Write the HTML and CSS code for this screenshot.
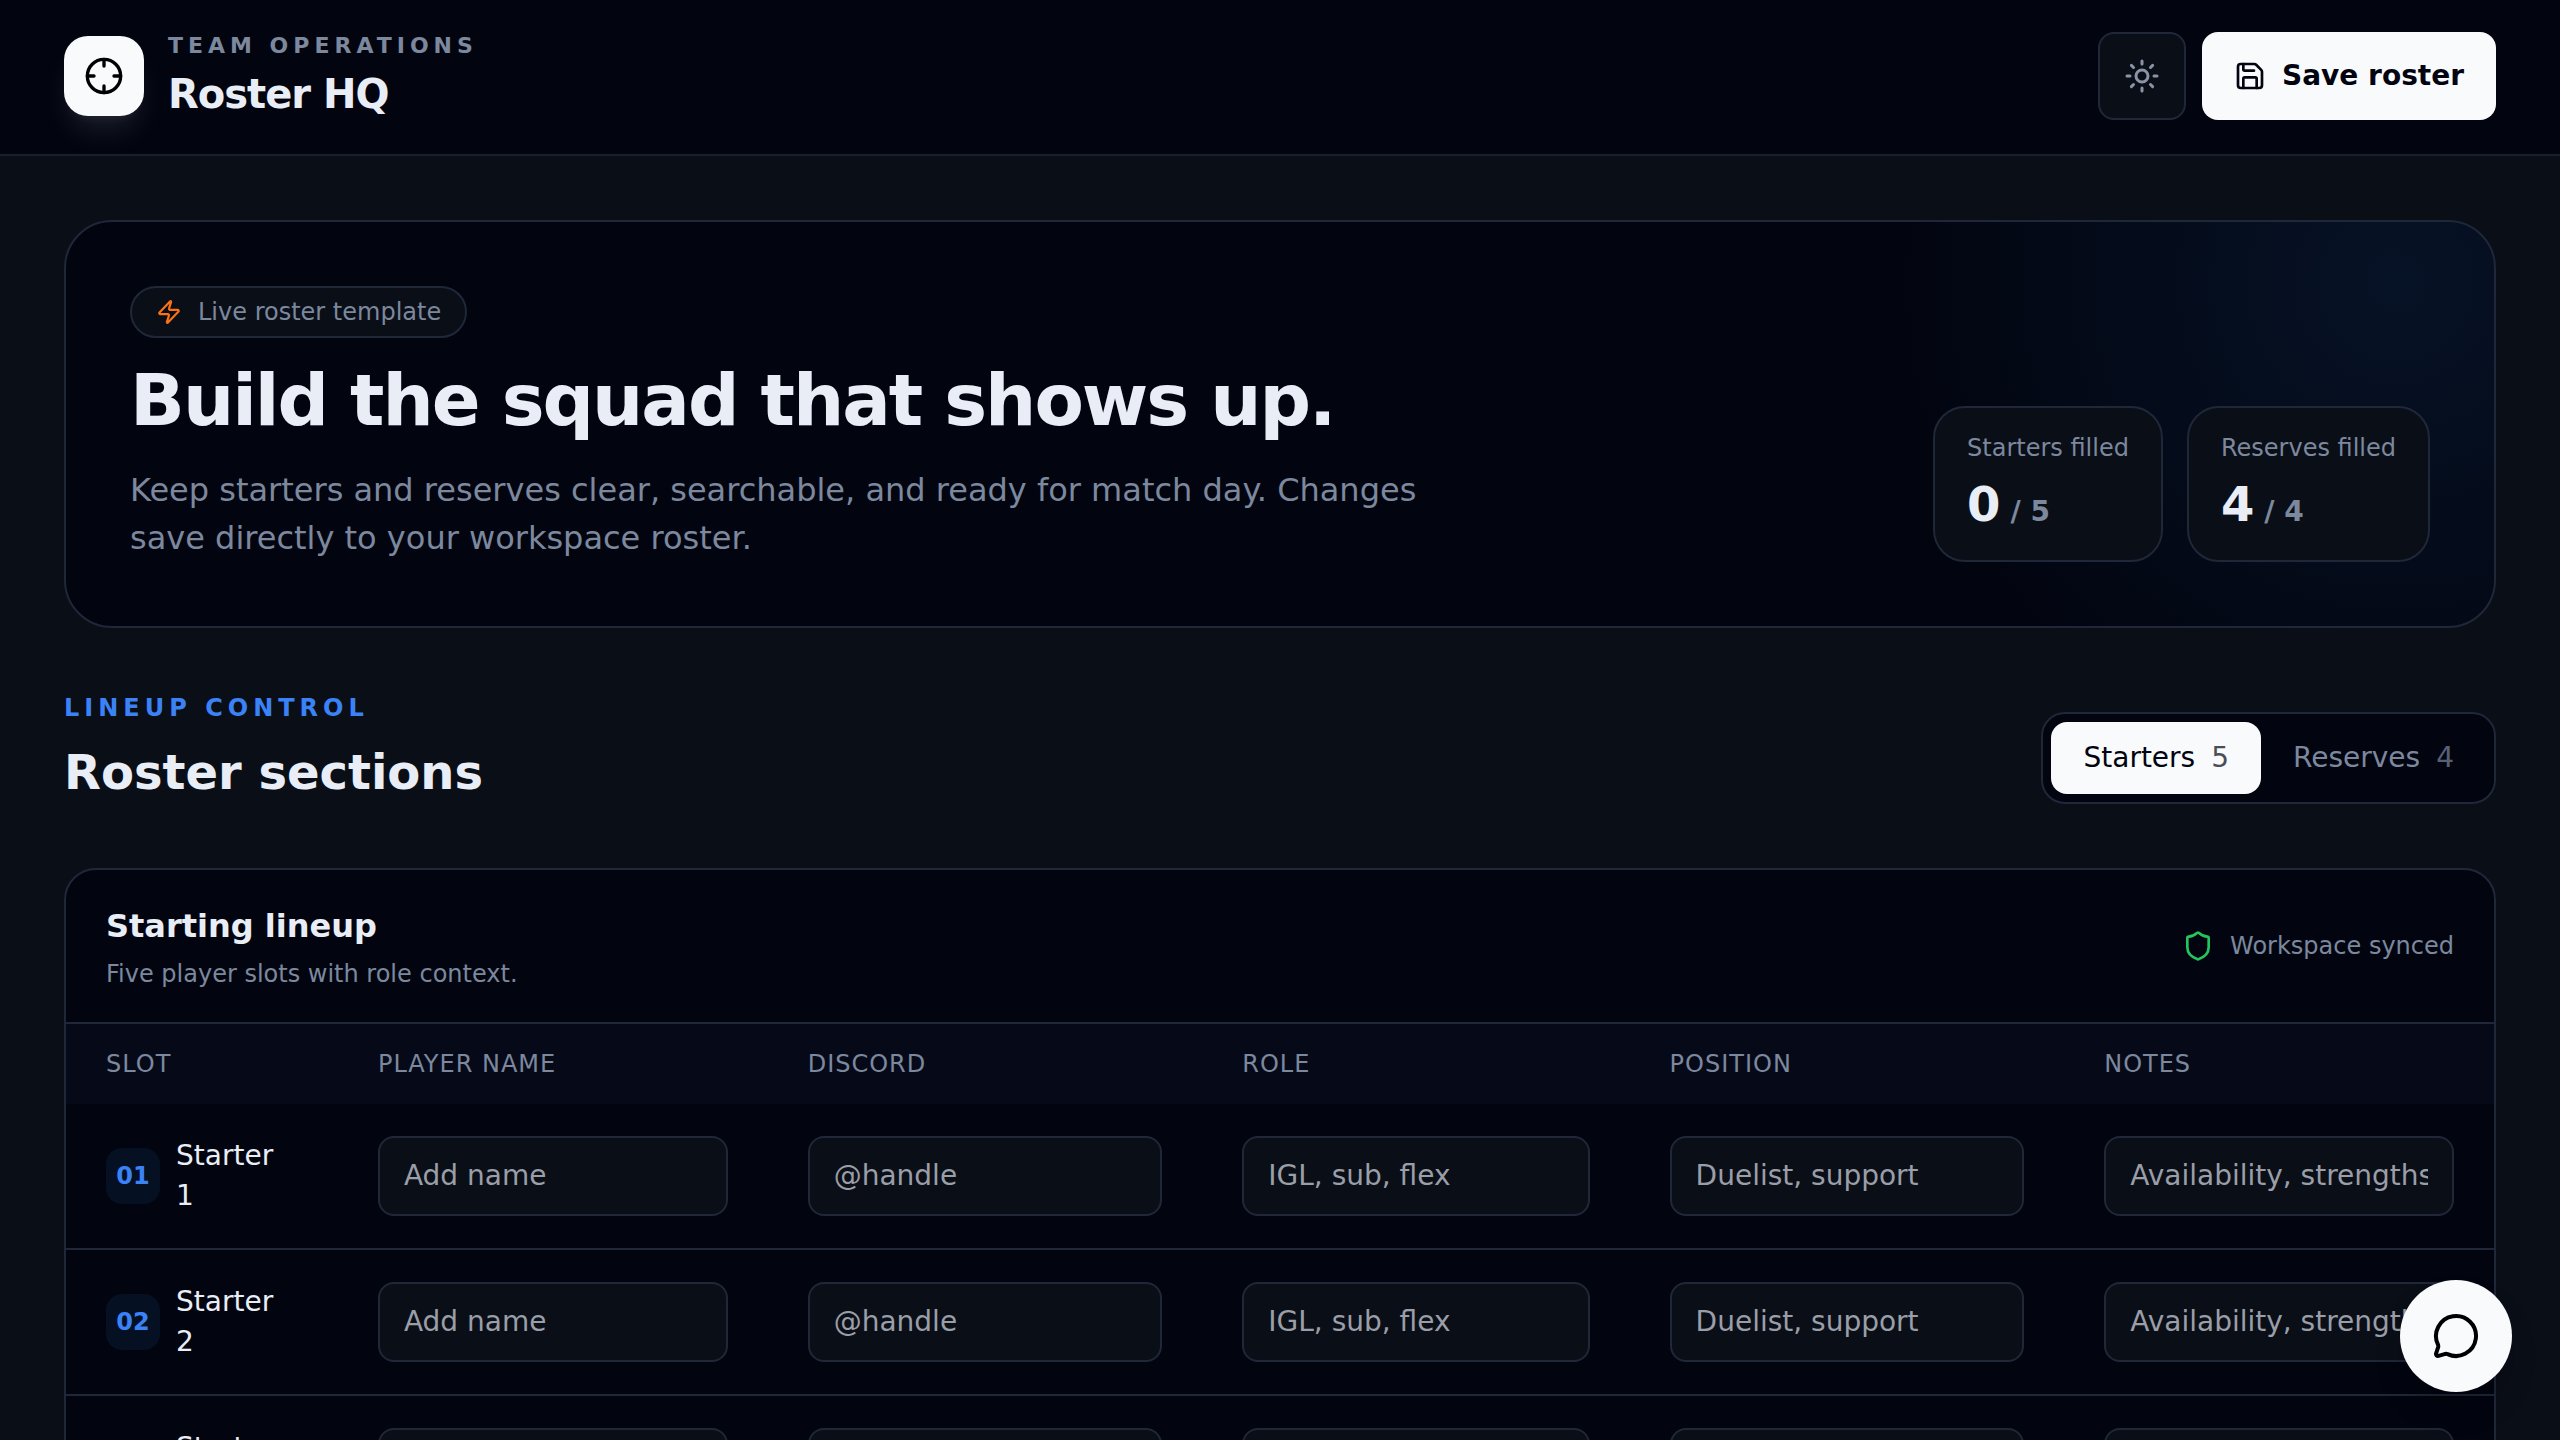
FILE: index.html
```html
<!DOCTYPE html>
<html lang="en">
<head>
  <meta charset="UTF-8">
  <meta name="viewport" content="width=device-width, initial-scale=1.0">
  <title>Roster HQ</title>
  <link rel="stylesheet" href="styles.css">
</head>
<body>

<header class="topbar">
  <div class="brand">
    <div class="brand-logo">
      <svg class="icon icon-xl" viewBox="0 0 24 24"><circle cx="12" cy="12" r="10"/><path d="M22 12h-4M6 12H2M12 6V2M12 22v-4"/></svg>
    </div>
    <div>
      <p class="brand-label">TEAM OPERATIONS</p>
      <h1 class="brand-name">Roster HQ</h1>
    </div>
  </div>
  <div class="topbar-actions">
    <button class="icon-btn" type="button" aria-label="Toggle theme">
      <svg class="icon icon-lg" viewBox="0 0 24 24"><circle cx="12" cy="12" r="4"/><path d="M12 2v2M12 20v2M4.93 4.93l1.41 1.41M17.66 17.66l1.41 1.41M2 12h2M20 12h2M6.34 17.66l-1.41 1.41M19.07 4.93l-1.41 1.41"/></svg>
    </button>
    <button class="save-btn" type="button">
      <svg class="icon icon-md" viewBox="0 0 24 24"><path d="M15.2 3a2 2 0 0 1 1.4.6l3.8 3.8a2 2 0 0 1 .6 1.4V19a2 2 0 0 1-2 2H5a2 2 0 0 1-2-2V5a2 2 0 0 1 2-2z"/><path d="M17 21v-7a1 1 0 0 0-1-1H8a1 1 0 0 0-1 1v7"/><path d="M7 3v4a1 1 0 0 0 1 1h7"/></svg>
      Save roster
    </button>
  </div>
</header>

<main class="page">
  <section class="hero">
    <div class="hero-copy">
      <span class="pill">
        <svg class="icon icon-sm" viewBox="0 0 24 24"><path d="M4 14a1 1 0 0 1-.78-1.63l9.9-10.2a.5.5 0 0 1 .86.46l-1.92 6.02A1 1 0 0 0 13 10h7a1 1 0 0 1 .78 1.63l-9.9 10.2a.5.5 0 0 1-.86-.46l1.92-6.02A1 1 0 0 0 11 14z"/></svg>
        Live roster template
      </span>
      <h2 class="hero-title">Build the squad that shows up.</h2>
      <p class="hero-text">Keep starters and reserves clear, searchable, and ready for match day. Changes save directly to your workspace roster.</p>
    </div>
    <div class="stats">
      <div class="stat">
        <p class="stat-label">Starters filled</p>
        <p class="stat-value">0<span class="stat-total">/ 5</span></p>
      </div>
      <div class="stat">
        <p class="stat-label">Reserves filled</p>
        <p class="stat-value">4<span class="stat-total">/ 4</span></p>
      </div>
    </div>
  </section>

  <section class="section-head">
    <div>
      <p class="section-label">LINEUP CONTROL</p>
      <h2 class="section-title">Roster sections</h2>
    </div>
    <div class="tabs" role="tablist">
      <button class="tab active" type="button" role="tab" aria-selected="true">Starters <span class="tab-count">5</span></button>
      <button class="tab" type="button" role="tab" aria-selected="false">Reserves <span class="tab-count">4</span></button>
    </div>
  </section>

  <section class="card">
    <div class="card-head">
      <div>
        <h3 class="card-title">Starting lineup</h3>
        <p class="card-text">Five player slots with role context.</p>
      </div>
      <p class="sync">
        <svg class="icon icon-md" viewBox="0 0 24 24"><path d="M20 13c0 5-3.5 7.5-7.66 8.95a1 1 0 0 1-.67-.01C7.5 20.5 4 18 4 13V6a1 1 0 0 1 1-1c2 0 4.5-1.2 6.24-2.72a1.17 1.17 0 0 1 1.52 0C14.51 3.81 17 5 19 5a1 1 0 0 1 1 1z"/></svg>
        Workspace synced
      </p>
    </div>
    <table class="roster">
      <colgroup>
        <col class="col-slot">
        <col class="col-name">
        <col class="col-discord">
        <col class="col-role">
        <col class="col-position">
        <col class="col-notes">
      </colgroup>
      <thead>
        <tr>
          <th scope="col">SLOT</th>
          <th scope="col">PLAYER NAME</th>
          <th scope="col">DISCORD</th>
          <th scope="col">ROLE</th>
          <th scope="col">POSITION</th>
          <th scope="col">NOTES</th>
        </tr>
      </thead>
      <tbody>
        <tr>
          <td><div class="slot"><span class="slot-no">01</span><span class="slot-name">Starter 1</span></div></td>
          <td><input type="text" placeholder="Add name" aria-label="Starter 1 player name"></td>
          <td><input type="text" placeholder="@handle" aria-label="Starter 1 Discord"></td>
          <td><input type="text" placeholder="IGL, sub, flex" aria-label="Starter 1 role"></td>
          <td><input type="text" placeholder="Duelist, support" aria-label="Starter 1 position"></td>
          <td><input type="text" placeholder="Availability, strengths" aria-label="Starter 1 notes"></td>
        </tr>
        <tr>
          <td><div class="slot"><span class="slot-no">02</span><span class="slot-name">Starter 2</span></div></td>
          <td><input type="text" placeholder="Add name" aria-label="Starter 2 player name"></td>
          <td><input type="text" placeholder="@handle" aria-label="Starter 2 Discord"></td>
          <td><input type="text" placeholder="IGL, sub, flex" aria-label="Starter 2 role"></td>
          <td><input type="text" placeholder="Duelist, support" aria-label="Starter 2 position"></td>
          <td><input type="text" placeholder="Availability, strengths" aria-label="Starter 2 notes"></td>
        </tr>
        <tr>
          <td><div class="slot"><span class="slot-no">03</span><span class="slot-name">Starter 3</span></div></td>
          <td><input type="text" placeholder="Add name" aria-label="Starter 3 player name"></td>
          <td><input type="text" placeholder="@handle" aria-label="Starter 3 Discord"></td>
          <td><input type="text" placeholder="IGL, sub, flex" aria-label="Starter 3 role"></td>
          <td><input type="text" placeholder="Duelist, support" aria-label="Starter 3 position"></td>
          <td><input type="text" placeholder="Availability, strengths" aria-label="Starter 3 notes"></td>
        </tr>
      </tbody>
    </table>
  </section>
</main>

<button class="chat-btn" type="button" aria-label="Open chat">
  <svg class="icon icon-xxl" viewBox="0 0 24 24"><path d="M2.992 16.342a2 2 0 0 1 .094 1.167l-1.065 3.29a1 1 0 0 0 1.236 1.168l3.413-.998a2 2 0 0 1 1.099.092 10 10 0 1 0-4.777-4.719"/></svg>
</button>

</body>
</html>
```

FILE: styles.css
```css
:root {
  --bg: #0a0e17;
  --panel: #020510;
  --head: #060a18;
  --line: #1f2739;
  --text: #e9eef6;
  --muted: #7c889e;
  --light: #f9fafc;
  --blue: #3b82f6;
}
* {
  box-sizing: border-box;
}
body {
  margin: 0;
  background: var(--bg);
  color: var(--text);
  font-family: "DejaVu Sans", sans-serif;
  font-size: 28px;
  line-height: 40px;
}
h1, h2, h3, p {
  margin: 0;
}
button, input {
  font: inherit;
}
button {
  border: 0;
  cursor: pointer;
}

/* Icons */
.icon {
  flex: none;
  fill: none;
  stroke: currentColor;
  stroke-width: 2;
  stroke-linecap: round;
  stroke-linejoin: round;
}
.icon-sm { width: 26px; height: 26px; }
.icon-md { width: 32px; height: 32px; }
.icon-lg { width: 36px; height: 36px; }
.icon-xl { width: 40px; height: 40px; }
.icon-xxl { width: 48px; height: 48px; }

/* Top bar */
.topbar {
  display: flex;
  justify-content: space-between;
  align-items: center;
  padding: 32px 64px 34px;
  background: #020410;
  border-bottom: 2px solid #18202c;
}
.brand {
  display: flex;
  align-items: center;
  gap: 24px;
}
.brand-logo {
  display: flex;
  justify-content: center;
  align-items: center;
  width: 80px;
  height: 80px;
  border-radius: 24px;
  background: var(--light);
  color: #000;
  box-shadow: 0 20px 30px -6px rgba(249, 250, 252, 0.1), 0 8px 12px -8px rgba(249, 250, 252, 0.1);
}
.brand-label {
  margin-bottom: 8px;
  color: var(--muted);
  font-size: 22px;
  font-weight: 700;
  line-height: 28px;
  letter-spacing: 5px;
}
.brand-name {
  font-size: 40px;
  line-height: 52px;
  letter-spacing: -1px;
}
.topbar-actions {
  display: flex;
  gap: 16px;
}
.icon-btn {
  display: flex;
  justify-content: center;
  align-items: center;
  width: 88px;
  height: 88px;
  padding: 0;
  border: 2px solid var(--line);
  border-radius: 16px;
  background: var(--bg);
  color: #8b94a7;
}
.save-btn {
  display: flex;
  align-items: center;
  gap: 16px;
  height: 88px;
  padding: 0 32px;
  border-radius: 16px;
  background: var(--light);
  color: #020410;
  font-weight: 700;
}

/* Page */
.page {
  display: flex;
  flex-direction: column;
  gap: 64px;
  padding: 64px;
}

/* Hero */
.hero {
  display: flex;
  justify-content: space-between;
  align-items: flex-end;
  padding: 64px;
  border: 2px solid var(--line);
  border-radius: 48px;
  background: radial-gradient(circle at 96% 15%, rgba(44, 135, 230, 0.1), transparent 500px) var(--panel);
}
.hero-copy {
  display: flex;
  flex-direction: column;
  align-items: flex-start;
  max-width: 1344px;
}
.pill {
  display: flex;
  align-items: center;
  gap: 16px;
  padding: 8px 24px;
  border: 2px solid var(--line);
  border-radius: 26px;
  background: var(--bg);
  color: var(--muted);
  font-size: 24px;
  line-height: 32px;
}
.pill .icon {
  color: #f97316;
}
.hero-title {
  margin: 24px 0 28px;
  font-size: 72px;
  line-height: 76px;
  letter-spacing: -2px;
}
.hero-text {
  color: var(--muted);
  font-size: 32px;
  line-height: 48px;
}
.stats {
  display: flex;
  gap: 24px;
}
.stat {
  padding: 24px 32px;
  border: 2px solid var(--line);
  border-radius: 32px;
  background: var(--bg);
}
.stat-label {
  margin-bottom: 8px;
  color: var(--muted);
  font-size: 24px;
  line-height: 32px;
}
.stat-value {
  font-size: 48px;
  font-weight: 700;
  line-height: 64px;
}
.stat-total {
  margin-left: 10px;
  color: var(--muted);
  font-size: 28px;
  line-height: 32px;
}

/* Section heading and tabs */
.section-head {
  display: flex;
  justify-content: space-between;
  align-items: flex-end;
}
.section-label {
  margin-bottom: 16px;
  color: var(--blue);
  font-size: 24px;
  font-weight: 700;
  line-height: 32px;
  letter-spacing: 5px;
}
.section-title {
  font-size: 48px;
  line-height: 64px;
}
.tabs {
  display: flex;
  padding: 8px;
  border: 2px solid var(--line);
  border-radius: 24px;
  background: var(--panel);
}
.tab {
  display: flex;
  gap: 16px;
  padding: 16px 32px;
  border-radius: 16px;
  background: transparent;
  color: var(--muted);
}
.tab.active {
  background: var(--light);
  color: #020410;
}
.tab-count {
  opacity: 0.7;
}

/* Lineup card */
.card {
  overflow: hidden;
  border: 2px solid var(--line);
  border-radius: 32px;
  background: var(--panel);
}
.card-head {
  display: flex;
  justify-content: space-between;
  align-items: center;
  padding: 32px 40px;
  border-bottom: 2px solid var(--line);
}
.card-title {
  margin-bottom: 8px;
  font-size: 32px;
  line-height: 48px;
}
.card-text {
  color: var(--muted);
  font-size: 24px;
  line-height: 32px;
}
.sync {
  display: flex;
  align-items: center;
  gap: 16px;
  color: var(--muted);
  font-size: 24px;
  line-height: 32px;
}
.sync .icon {
  color: #22c55e;
}

/* Roster table */
.roster {
  width: 100%;
  table-layout: fixed;
  border-collapse: separate;
  border-spacing: 0;
}
.col-slot { width: 11.2%; }
.col-name { width: 17.7%; }
.col-discord { width: 17.9%; }
.col-role { width: 17.6%; }
.col-position { width: 17.9%; }
.col-notes { width: 17.7%; }
.roster th {
  padding: 24px 40px;
  background: var(--head);
  color: var(--muted);
  font-size: 24px;
  font-weight: 400;
  line-height: 32px;
  letter-spacing: 1px;
  text-align: left;
}
.roster td {
  padding: 32px 40px;
  border-bottom: 2px solid var(--line);
}
.roster tr:last-child td {
  border-bottom: 0;
}
.roster input {
  display: block;
  width: 100%;
  height: 80px;
  padding: 0 24px 2px;
  border: 2px solid var(--line);
  border-radius: 16px;
  background: var(--bg);
  color: var(--text);
}
.roster input::placeholder {
  color: #9a9ea8;
}
.slot {
  display: flex;
  align-items: center;
  gap: 16px;
}
.slot-no {
  display: flex;
  flex: none;
  justify-content: center;
  align-items: center;
  width: 54px;
  height: 56px;
  border-radius: 16px;
  background: #051122;
  color: var(--blue);
  font-size: 24px;
  font-weight: 700;
}

/* Floating chat button */
.chat-btn {
  position: fixed;
  right: 48px;
  bottom: 48px;
  display: flex;
  justify-content: center;
  align-items: center;
  width: 112px;
  height: 112px;
  padding: 0;
  border-radius: 50%;
  background: var(--light);
  color: #000;
  box-shadow: 0 20px 30px -6px rgba(0, 0, 0, 0.3);
}
```
